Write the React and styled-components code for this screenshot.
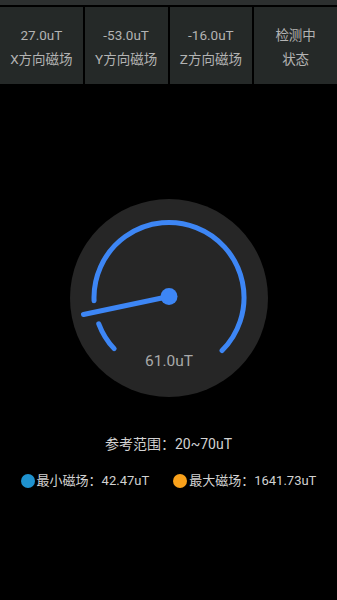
import styled, { createGlobalStyle } from "styled-components";

const GlobalStyle = createGlobalStyle`
  html, body {
    margin: 0;
    padding: 0;
    background: #000;
  }
  body {
    font-family: Roboto, "Noto Sans CJK SC", sans-serif;
  }
`;

const Page = styled.div`
  width: 337px;
  height: 600px;
  background: #000;
  display: flex;
  flex-direction: column;
  align-items: center;
  overflow: hidden;
`;

const StatusStrip = styled.div`
  width: 100%;
  height: 5px;
  background: #2c2f2f;
  margin-bottom: 2px;
`;

const CellRow = styled.div`
  width: 100%;
  display: grid;
  grid-template-columns: repeat(4, 1fr);
  column-gap: 2px;
`;

const Cell = styled.div`
  height: 77px;
  background: #252928;
  display: flex;
  flex-direction: column;
  align-items: center;
  justify-content: center;
  color: #b3b3b3;
  font-size: 13.5px;
  line-height: 24px;
  padding-top: 2px;
  box-sizing: border-box;
`;

const GaugeFace = styled.div`
  margin-top: 115px;
  width: 198px;
  height: 198px;
  border-radius: 50%;
  background: #262626;
`;

const RefText = styled.div`
  margin-top: 37px;
  color: #d2d2d2;
  font-size: 14px;
  line-height: 20px;
`;

const Legend = styled.div`
  margin-top: 17px;
  display: flex;
  align-items: center;
  gap: 24px;
`;

const LegendItem = styled.div`
  display: flex;
  align-items: center;
  gap: 2px;
  color: #d2d2d2;
  font-size: 13px;
  line-height: 20px;
`;

const Dot = styled.span`
  width: 14px;
  height: 14px;
  border-radius: 50%;
  background: ${(p) => p.$color};
`;

const readings = [
  { value: "27.0uT", label: "X方向磁场" },
  { value: "-53.0uT", label: "Y方向磁场" },
  { value: "-16.0uT", label: "Z方向磁场" },
  { value: "检测中", label: "状态" },
];

const BLUE = "#3d86f5";
const CX = 99;
const CY = 98.5;
const R = 75;

const pt = (deg, r = R) => {
  const a = (deg * Math.PI) / 180;
  return [CX + r * Math.cos(a), CY + r * Math.sin(a)];
};

const arc = (from, to) => {
  const [x1, y1] = pt(from);
  const [x2, y2] = pt(to);
  const large = to - from > 180 ? 1 : 0;
  return `M ${x1} ${y1} A ${R} ${R} 0 ${large} 1 ${x2} ${y2}`;
};

const Gauge = ({ value }) => (
  <GaugeFace>
    <svg width="198" height="198" viewBox="0 0 198 198">
      <path d={arc(137, 159.5)} stroke={BLUE} strokeWidth="5" fill="none" strokeLinecap="round" />
      <path d={arc(177.5, 405)} stroke={BLUE} strokeWidth="5" fill="none" strokeLinecap="round" />
      <line x1={CX} y1={CY - 1} x2="13.5" y2="115.5" stroke={BLUE} strokeWidth="5" strokeLinecap="round" />
      <circle cx={CX} cy={CY - 1} r="8.5" fill={BLUE} />
      <text
        x={CX}
        y="166.5"
        textAnchor="middle"
        fill="#a9a9a9"
        fontSize="15.5"
        fontFamily='Roboto, "Noto Sans CJK SC", sans-serif'
      >
        {value}
      </text>
    </svg>
  </GaugeFace>
);

export default function App() {
  return (
    <Page>
      <GlobalStyle />
      <StatusStrip />
      <CellRow>
        {readings.map((r) => (
          <Cell key={r.label}>
            <span>{r.value}</span>
            <span>{r.label}</span>
          </Cell>
        ))}
      </CellRow>
      <Gauge value="61.0uT" />
      <RefText>参考范围：20~70uT</RefText>
      <Legend>
        <LegendItem>
          <Dot $color="#1f92cf" />
          最小磁场：42.47uT
        </LegendItem>
        <LegendItem>
          <Dot $color="#f9a11b" />
          最大磁场：1641.73uT
        </LegendItem>
      </Legend>
    </Page>
  );
}
